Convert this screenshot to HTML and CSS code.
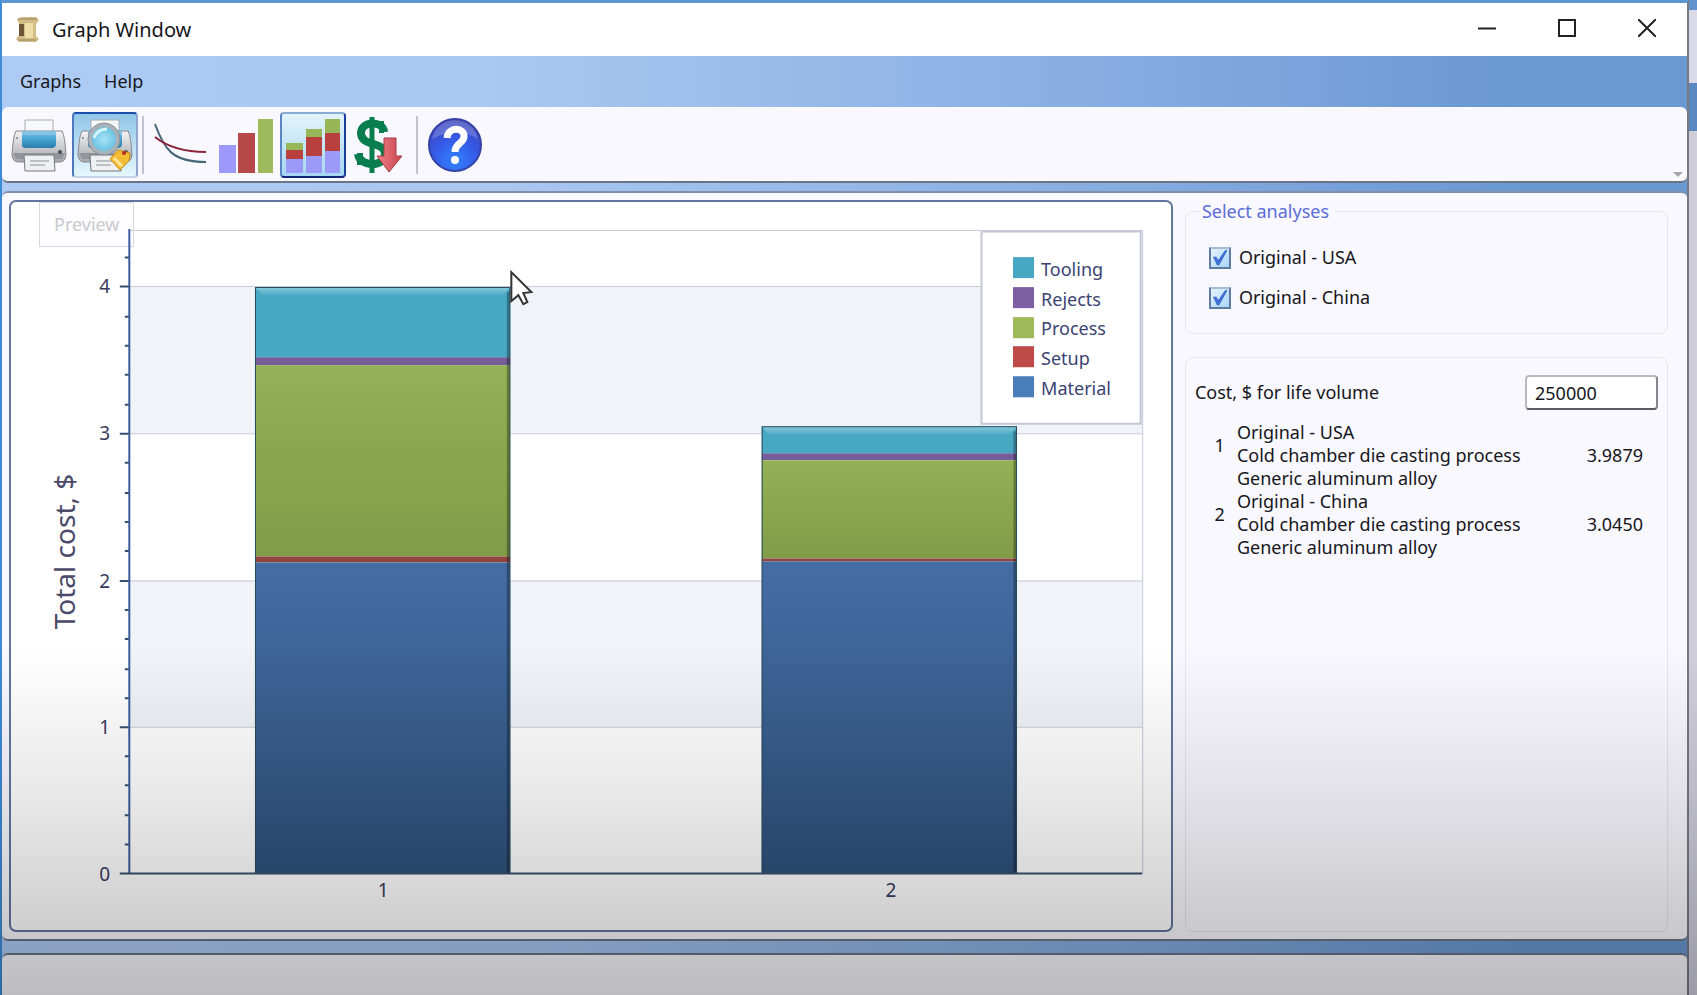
FILE: index.html
```html
<!DOCTYPE html>
<html lang="en">
<head>
    <meta charset="UTF-8">
    <meta name="viewport" content="width=device-width, initial-scale=1.0">
    <title>Graph Window</title>
    <link rel="stylesheet" href="styles.css">
</head>
<body>
    <div class="window">
        <header class="titlebar">
            <svg class="app-icon" viewBox="0 0 24 26" aria-hidden="true">
                <path d="M1 2l5-2h14l3 3-3 4v12l3 3-3 3H3l-3-3 3-4V7z" fill="#d3bd86"/>
                <path d="M3 7h5v12H3z" fill="#6d5638"/>
                <path d="M9 6h8v15H9z" fill="#efdca6"/>
                <path d="M2 2h19M2 23h18" stroke="#b5a071" stroke-width="2"/>
            </svg>
            <h1>Graph Window</h1>
            <div class="window-buttons">
                <button type="button" aria-label="Minimize"><svg viewBox="0 0 18 18"><path d="M0 9.500h18"/></svg></button>
                <button type="button" aria-label="Maximize"><svg viewBox="0 0 18 18"><path d="M1 1h16v16H1z"/></svg></button>
                <button type="button" aria-label="Close"><svg viewBox="0 0 18 18"><path d="M0 0l18 18M18 0L0 18"/></svg></button>
            </div>
        </header>

        <nav class="menubar">
            <a href="#graphs">Graphs</a>
            <a href="#help">Help</a>
        </nav>

        <div class="toolbar">
            <button type="button" class="tool" aria-label="Print">
                <svg viewBox="0 0 56 56"><use href="#printer"/></svg>
            </button>
            <button type="button" class="tool tool-hover" aria-label="Preview">
                <svg viewBox="0 0 56 56">
                    <use href="#printer"/>
                    <circle cx="27" cy="22" r="14" fill="url(#lens)" stroke="#a9b2b9" stroke-width="4"/>
                    <circle cx="27" cy="22" r="16" fill="none" stroke="#87919a"/>
                    <path d="M17 21q3-9 13-9" fill="none" stroke="#d6f4fd" stroke-width="3"/>
                    <path d="M33 42l8-9 12 3-1 8-9 9z" fill="#f4bd35" stroke="#c68d1c"/>
                    <path d="M37 41l8 8" stroke="#ffe79a" stroke-width="3"/>
                    <circle cx="47" cy="36" r="2" fill="#b02c20"/>
                </svg>
            </button>
            <span class="separator"></span>
            <button type="button" class="tool" aria-label="Cost curves">
                <svg viewBox="0 0 56 56" fill="none" stroke-width="2">
                    <path d="M2 7c9 25 17 38 51 38" stroke="#456577"/>
                    <path d="M2 20c10 8 24 15 51 15" stroke="#8b2438"/>
                </svg>
            </button>
            <button type="button" class="tool" aria-label="Bar graph">
                <svg viewBox="0 0 56 56">
                    <path d="M0 28h17v28H0z" fill="#9c99fb"/>
                    <path d="M19 16h17v40H19z" fill="#b8494b"/>
                    <path d="M39 2h15v54H39z" fill="#9dba5c"/>
                </svg>
            </button>
            <button type="button" class="tool tool-active" aria-label="Stacked bar graph">
                <svg viewBox="0 0 56 56">
                    <path d="M1 42h17v14H1zM21 39h16v17H21zM40 34h15v22H40z" fill="#9b9af8"/>
                    <path d="M1 33h17v9H1zM21 20h16v19H21zM40 16h15v18H40z" fill="#b8413f"/>
                    <path d="M1 26h17v7H1zM21 12h16v8H21zM40 2h15v14H40z" fill="#97b656"/>
                </svg>
            </button>
            <button type="button" class="tool" aria-label="Cost reduction">
                <svg viewBox="0 0 56 56">
                    <path d="M33 15c-1-12-23-11-23 1 0 14 24 8 24 21 0 13-25 14-27 0" fill="none" stroke="#087d4d" stroke-width="8"/>
                    <path d="M21 0v56" stroke="#087d4d" stroke-width="5"/>
                    <path d="M28 4h5v12h-5zM6 36h6v12H6z" fill="#087d4d"/>
                    <path d="M33 21h12v18h6L38 55 26 39h7z" fill="url(#redArrow)" stroke="#a53c44"/>
                </svg>
            </button>
            <span class="separator"></span>
            <button type="button" class="tool" aria-label="Help">
                <svg viewBox="0 0 56 56">
                    <circle cx="28" cy="28" r="26" fill="url(#helpBall)" stroke="#3541a4" stroke-width="2"/>
                    <path d="M5 22C10-3 46-3 51 22 36 12 20 14 5 22z" fill="#fff" opacity=".2"/>
                    <path d="M20 21c1-12 18-11 17-1-1 7-9 6-9 15" fill="none" stroke="#fff" stroke-width="7"/>
                    <circle cx="28" cy="43" r="4" fill="#fff"/>
                </svg>
            </button>
            <span class="overflow-arrow"></span>
        </div>

        <main class="content">
            <section class="chart-panel">
                <span class="tooltip">Preview</span>
                <svg class="chart" viewBox="12 202 1157 727" role="img" aria-label="Total cost, $">
                    <!-- alternating bands and grid lines -->
                    <path class="bands" d="M130 286h1011v147H130zM130 580h1011v146H130z"/>
                    <path class="grid" d="M130 230.500h1011M130 286.500h1011M130 433.500h1011M130 580.500h1011M130 726.500h1011M1141.500 230v642"/>

                    <!-- stacked bars -->
                    <g>
                        <path fill="#48a8c4" d="M255 287h255v70H255z"/>
                        <path fill="#745d98" d="M255 357h255v8H255z"/>
                        <path fill="url(#process)" d="M255 365h255v191H255z"/>
                        <path fill="#8f4442" d="M255 556h255v6H255z"/>
                        <path fill="url(#material)" d="M255 562h255v310H255z"/>
                        <path fill="url(#bevel)" d="M255 287h255l-8 9H263z"/>
                        <path class="bar-shade" d="M508 292v580"/>
                        <path class="bar-edge" d="M255.500 872V287.500h254V872"/>
                    </g>
                    <g>
                        <path fill="#48a8c4" d="M761 426h255v27H761z"/>
                        <path fill="#745d98" d="M761 453h255v7H761z"/>
                        <path fill="url(#process)" d="M761 460h255v98H761z"/>
                        <path fill="#8f4442" d="M761 558h255v3H761z"/>
                        <path fill="url(#material)" d="M761 561h255v311H761z"/>
                        <path fill="url(#bevel)" d="M761 426h255l-8 9H769z"/>
                        <path class="bar-shade" d="M1014 431v441"/>
                        <path class="bar-edge" d="M761.500 872V426.500h254V872"/>
                    </g>

                    <!-- axes -->
                    <path class="axis-y" d="M129.500 229v644"/>
                    <path class="axis-x" d="M120 872.500h1021"/>
                    <path class="ticks" d="M120 286.500h9M120 433.500h9M120 580.500h9M120 726.500h9"/>
                    <path class="ticks" d="M125 843.500h4M125 814.500h4M125 784.500h4M125 755.500h4M125 697.500h4M125 668.500h4M125 638.500h4M125 609.500h4M125 550.500h4M125 521.500h4M125 492.500h4M125 462.500h4M125 404.500h4M125 374.500h4M125 345.500h4M125 316.500h4M125 257.500h4"/>
                    <g class="axis-label" text-anchor="middle">
                        <text x="105" y="293">4</text>
                        <text x="105" y="440">3</text>
                        <text x="105" y="587">2</text>
                        <text x="105" y="733">1</text>
                        <text x="105" y="880">0</text>
                        <text x="383" y="896">1</text>
                        <text x="890" y="896">2</text>
                    </g>
                    <text class="axis-title" text-anchor="middle" transform="translate(75 551) rotate(-90)">Total cost, $</text>

                    <!-- legend -->
                    <path class="legend-box" d="M980.500 231.500h159v192h-159z"/>
                    <path fill="#48a8c4" d="M1012 257h21v21h-21z"/>
                    <path fill="#7f5fa4" d="M1012 287h21v21h-21z"/>
                    <path fill="#9fba59" d="M1012 317h21v21h-21z"/>
                    <path fill="#be4b48" d="M1012 346h21v21h-21z"/>
                    <path fill="#4a7ebb" d="M1012 376h21v21h-21z"/>
                    <g class="legend-text">
                        <text x="1040" y="276">Tooling</text>
                        <text x="1040" y="306">Rejects</text>
                        <text x="1040" y="335">Process</text>
                        <text x="1040" y="365">Setup</text>
                        <text x="1040" y="395">Material</text>
                    </g>

                    <!-- mouse pointer -->
                    <path class="pointer" d="M511 272v29l7-6 5 9 4-2-4-9 8-1z"/>
                </svg>
            </section>

            <aside class="side">
                <fieldset class="group analyses">
                    <legend>Select analyses</legend>
                    <label><input type="checkbox" checked> Original - USA</label>
                    <label><input type="checkbox" checked> Original - China</label>
                </fieldset>

                <section class="group costs">
                    <div class="volume">
                        <label for="volume">Cost, $ for life volume</label>
                        <input type="text" id="volume" value="250000">
                    </div>
                    <table>
                        <tr>
                            <td class="num">1</td>
                            <td>Original - USA<br>Cold chamber die casting process<br>Generic aluminum alloy</td>
                            <td class="cost">3.9879</td>
                        </tr>
                        <tr>
                            <td class="num">2</td>
                            <td>Original - China<br>Cold chamber die casting process<br>Generic aluminum alloy</td>
                            <td class="cost">3.0450</td>
                        </tr>
                    </table>
                </section>
            </aside>
        </main>

        <footer class="statusbar"></footer>
    </div>
    <div class="backdrop"></div>

    <!-- shared shapes and gradients -->
    <svg class="defs" aria-hidden="true">
        <defs>
            <linearGradient id="process" x2="0" y2="1">
                <stop stop-color="#93b155"/><stop offset="1" stop-color="#819c47"/>
            </linearGradient>
            <linearGradient id="material" x2="0" y2="1">
                <stop stop-color="#446da3"/><stop offset="1" stop-color="#30527d"/>
            </linearGradient>
            <linearGradient id="bevel" x2="0" y2="1">
                <stop stop-color="#8bcadb"/><stop offset="1" stop-color="#48a8c4"/>
            </linearGradient>
            <linearGradient id="metal" x2="0" y2="1">
                <stop stop-color="#f4f4f6"/><stop offset="1" stop-color="#a5a6ab"/>
            </linearGradient>
            <linearGradient id="glass" x2="0" y2="1">
                <stop stop-color="#78bfe2"/><stop offset=".5" stop-color="#45a2d1"/><stop offset="1" stop-color="#2b7cab"/>
            </linearGradient>
            <radialGradient id="lens">
                <stop stop-color="#a5e3f5"/><stop offset="1" stop-color="#62bedf"/>
            </radialGradient>
            <linearGradient id="redArrow">
                <stop stop-color="#ee8188"/><stop offset="1" stop-color="#ca454f"/>
            </linearGradient>
            <radialGradient id="helpBall" cy=".8" r=".8">
                <stop stop-color="#3084ff"/><stop offset=".5" stop-color="#355be8"/><stop offset="1" stop-color="#3d43b6"/>
            </radialGradient>
            <g id="printer">
                <path d="M14 3h28v14H14z" fill="#f7f8fa" stroke="#a8abb0"/>
                <path d="M5 14h46q3 5 4 24-1 7-6 7H7q-5 0-6-7 1-19 4-24z" fill="url(#metal)" stroke="#85868b"/>
                <path d="M2 36h52l-3 6H5z" fill="#94959a"/>
                <path d="M11 14h34v14q-1 3-4 3H15q-4 0-4-3z" fill="url(#glass)"/>
                <path d="M11 14h34v4H11z" fill="#82c4e1"/>
                <circle cx="6" cy="21" r="1" fill="#7b7c80"/>
                <circle cx="49" cy="35" r="2" fill="#4a4a4d"/>
                <path d="M13 38h30l1 16H14z" fill="#eff0f2" stroke="#76777b"/>
                <path d="M19 44h19M19 48h15" stroke="#8d8e92" stroke-width="1"/>
            </g>
        </defs>
    </svg>
</body>
</html>
```
FILE: styles.css
```css
:root {
    --panel: #f9f8fe;
    --frame: #6b7484;
    --group-border: #e6e5ef;
    --text: #16161c;
}

* {
    margin: 0;
    padding: 0;
    box-sizing: border-box;
}

body {
    font-family: "Noto Sans", "Open Sans", sans-serif;
    font-size: 18px;
    line-height: 23px;
    color: var(--text);
    height: 100vh;
    display: flex;
    overflow: hidden;
}

/* darker towards the bottom of the screen */
body::after {
    content: '';
    position: fixed;
    inset: 0;
    background: linear-gradient(rgba(0, 0, 0, 0) 65%, rgba(0, 0, 0, 0.09) 80%, rgba(0, 0, 0, 0.24) 100%);
    pointer-events: none;
}

.window {
    flex: 1;
    min-width: 0;
    display: flex;
    flex-direction: column;
    border: 2px solid #3b8bd6;
    border-top: 3px solid #5d97d2;
    border-right-color: #777a86;
    border-bottom: none;
    background: linear-gradient(90deg, #adcbf5 0%, #a9c7f1 30%, #84abe0 68%, #6a98d1 90%, #6a98d1 100%);
}

.backdrop {
    width: 8px;
    background: linear-gradient(#6093cd 10px, #dbdae8 10px, #dbdae8 83px, #5b87c0 83px, #5b87c0 131px, #cfced9 131px);
}

.titlebar {
    height: 53px;
    display: flex;
    align-items: center;
    gap: 12px;
    padding-left: 14px;
    background: #fff;
}

.app-icon {
    width: 24px;
    height: 26px;
}

.titlebar h1 {
    flex: 1;
    font-size: 20px;
    font-weight: 400;
}

.window-buttons {
    display: flex;
}

.window-buttons button {
    width: 80px;
    height: 53px;
    border: none;
    background: none;
}

.window-buttons svg {
    width: 18px;
    height: 18px;
    fill: none;
    stroke: #222;
    stroke-width: 2;
}

.menubar {
    height: 51px;
    display: flex;
    align-items: center;
    gap: 23px;
    padding-left: 18px;
}

.menubar a {
    color: var(--text);
    text-decoration: none;
}

.toolbar {
    height: 76px;
    display: flex;
    align-items: center;
    padding: 2px 4px 0;
    background: var(--panel);
    border-bottom: 2px solid var(--frame);
    border-radius: 6px;
}

.tool {
    width: 66px;
    height: 66px;
    padding: 3px;
    border: 2px solid transparent;
    border-radius: 4px;
    background: none;
}

.tool svg {
    display: block;
    width: 56px;
    height: 56px;
}

.tool-hover {
    border-color: #1d4eaa #8fa6d3 #c4d5e8 #4f78bc;
    background: linear-gradient(#8fc6e8, #e6f7fe);
}

.tool-active {
    border-color: #88abd4 #183f9e #10257c #5c85c4;
    background: linear-gradient(#e3f3fb, #a5d8f2);
}

.separator {
    width: 2px;
    height: 58px;
    margin: 0 4px;
    background: #c2c2ce;
}

.overflow-arrow {
    align-self: flex-end;
    margin-left: auto;
    margin-bottom: 4px;
    border: 5px solid transparent;
    border-top-color: #a5a5ad;
    border-bottom: none;
}

.content {
    flex: 1;
    min-height: 0;
    display: flex;
    gap: 12px;
    margin-top: 8px;
    padding: 7px 19px 7px 7px;
    background: var(--panel);
    border-top: 2px solid #8390ad;
    border-bottom: 2px solid var(--frame);
    border-radius: 6px;
}

.chart-panel {
    flex: 1162;
    min-width: 0;
    position: relative;
    background: #fff;
    border: 2px solid #62759c;
    border-radius: 7px;
}

/* sits above the fading tooltip, as the axis is drawn over it */
.chart {
    position: relative;
    display: block;
    width: 100%;
    height: 100%;
}

.bands {
    fill: #f0f3f8;
}

.grid {
    fill: none;
    stroke: #c6cad9;
    stroke-width: 1;
}

.axis-y {
    stroke: #3d5d9f;
    stroke-width: 2;
}

.axis-x,
.ticks {
    stroke: #38506f;
    stroke-width: 2;
}

.bar-edge {
    fill: none;
    stroke: #294d5e;
    stroke-width: 1;
}

.bar-shade {
    stroke: #000;
    stroke-width: 3;
    opacity: 0.3;
}

.axis-label {
    font-size: 19px;
    fill: #3a3a60;
}

.axis-title {
    font-size: 28px;
    fill: #4b4b69;
}

.legend-box {
    fill: #fff;
    stroke: #c3c7d8;
    stroke-width: 2;
}

.legend-text {
    font-size: 18px;
    fill: #3b4373;
}

.pointer {
    fill: #fff;
    stroke: #333;
    stroke-width: 2;
}

.tooltip {
    position: absolute;
    top: 0;
    left: 28px;
    padding: 10px 14px;
    background: #fdfcfe;
    border: 1px solid #d8d8de;
    color: #c9c9ce;
}

.side {
    flex: 484;
    min-width: 0;
    display: flex;
    flex-direction: column;
    gap: 23px;
}

.group {
    border: 1px solid var(--group-border);
    border-radius: 8px;
}

.analyses {
    display: flex;
    flex-direction: column;
    gap: 17px;
    padding: 23px 23px 24px;
}

.analyses legend {
    margin-left: -9px;
    padding: 0 6px 0 2px;
    color: #5c6dd8;
}

.analyses label {
    display: flex;
    align-items: center;
    gap: 8px;
}

.analyses input {
    appearance: none;
    width: 22px;
    height: 22px;
    border: 2px solid #5d7ba3;
    border-top-color: #a8bdd4;
    background: linear-gradient(135deg, #e6f3fd, #a9d5f5);
    display: grid;
    place-items: center;
}

.analyses input:checked::before {
    content: '';
    width: 16px;
    height: 16px;
    background: #416ed2;
    clip-path: polygon(6% 46%, 28% 46%, 40% 66%, 82% 4%, 98% 4%, 46% 98%, 32% 98%);
}

.costs {
    flex: 1;
    padding: 17px 9px;
}

.volume {
    display: flex;
    align-items: center;
    justify-content: space-between;
}

.volume input {
    width: 133px;
    height: 35px;
    padding: 0 8px;
    border: 2px solid #b9b9c2;
    border-bottom-color: #5b5b63;
    border-right-color: #85858e;
    border-radius: 4px;
    background: #fff;
    font: inherit;
    color: inherit;
}

table {
    width: 100%;
    margin-top: 11px;
    border-collapse: collapse;
}

td {
    vertical-align: middle;
}

.num {
    width: 42px;
    padding: 0 12px 20px 0;
    text-align: right;
}

.cost {
    padding-right: 15px;
    text-align: right;
}

.statusbar {
    height: 42px;
    margin-top: 12px;
    background: var(--panel);
    border-top: 2px solid var(--frame);
    border-radius: 6px 6px 0 0;
}

.defs {
    position: absolute;
    width: 0;
    height: 0;
}
```
